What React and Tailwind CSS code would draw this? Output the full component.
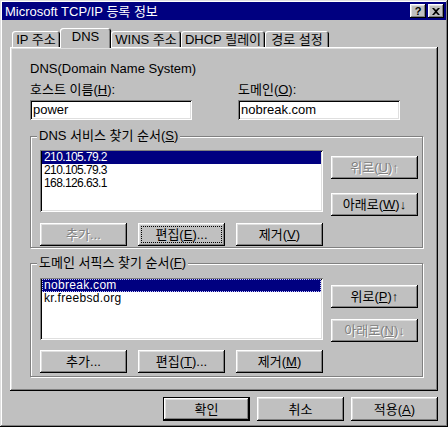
import React from "react";

const raised =
  "shadow-[inset_-1px_-1px_#000,inset_1px_1px_#fff,inset_-2px_-2px_#808080,inset_2px_2px_#dfdfdf]";
const sunken =
  "shadow-[inset_1px_1px_#808080,inset_-1px_-1px_#fff,inset_2px_2px_#000,inset_-2px_-2px_#dfdfdf]";
const disabledText = "text-[#808080] [text-shadow:1px_1px_0_#fff]";

const tabs = [
  { label: "IP 주소", width: "w-[48px]" },
  { label: "DNS", width: "w-[51px]", active: true },
  { label: "WINS 주소", width: "w-[70px]" },
  { label: "DHCP 릴레이", width: "w-[84px]" },
  { label: "경로 설정", width: "w-[64px]" },
];

function Btn({ children, disabled, focus, isDefault, className = "" }) {
  return (
    <div
      className={`flex h-[23px] w-[87px] shrink-0 bg-[#c0c0c0] p-[3px] ${raised} ${
        isDefault ? "border border-black p-[2px]" : ""
      } ${className}`}
    >
      <span
        className={`flex flex-1 items-center justify-center border border-dotted leading-none ${
          focus ? "border-black" : "border-transparent"
        } ${disabled ? disabledText : ""}`}
      >
        {children}
      </span>
    </div>
  );
}

function GroupBox({ label, children, className = "" }) {
  return (
    <div
      className={`relative w-[393px] border border-[#808080] shadow-[inset_1px_1px_#fff,1px_1px_#fff] ${className}`}
    >
      <span className="absolute -top-[9px] left-[6px] bg-[#c0c0c0] px-[2px] leading-[15px]">
        {label}
      </span>
      {children}
    </div>
  );
}

function ListBox({ items, focusRow, tight }) {
  return (
    <div className={`h-[62px] w-[283px] bg-white p-[2px] pt-[1px] text-[12px] ${sunken}`}>
      {items.map((item, i) => (
        <div
          key={item}
          className={`h-[13px] pl-[2px] leading-[13px] ${
            tight ? "tracking-[-0.6px]" : "tracking-[0.3px]"
          } ${i === 0 ? "bg-[#000080] text-white" : ""} ${
            i === 0 && focusRow ? "outline-1 -outline-offset-1 outline-dotted outline-[#c0c0ff]" : ""
          }`}
        >
          {item}
        </div>
      ))}
    </div>
  );
}

export default function App() {
  return (
    <div className="flex h-[427px] w-[448px] flex-col bg-[#c0c0c0] p-[2px] font-['Liberation_Sans','Noto_Sans_CJK_KR',sans-serif] text-[13px] text-black shadow-[inset_-1px_-1px_#000,inset_1px_1px_#dfdfdf,inset_-2px_-2px_#808080,inset_2px_2px_#fff]">
      {/* title bar */}
      <div className="flex h-[18px] shrink-0 items-center justify-between bg-[#000080] pl-[3px] pr-[2px] text-white">
        <span className="leading-none">Microsoft TCP/IP 등록 정보</span>
        <div className="flex gap-[2px]">
          <div className={`flex h-[14px] w-[16px] items-center justify-center bg-[#c0c0c0] text-[11px] font-bold text-black ${raised}`}>
            ?
          </div>
          <div className={`flex h-[14px] w-[16px] items-center justify-center bg-[#c0c0c0] ${raised}`}>
            <svg width="8" height="7" viewBox="0 0 8 7">
              <path d="M0 0h2l2 2 2-2h2L5 3.5 8 7H6L4 5 2 7H0l3-3.5z" fill="#000" />
            </svg>
          </div>
        </div>
      </div>

      {/* tabs */}
      <div className="mt-[8px] flex items-end pl-[10px]">
        {tabs.map((t) =>
          t.active ? (
            <div
              key={t.label}
              className={`relative z-10 -mb-[1px] flex h-[20px] ${t.width} justify-center rounded-t-[3px] bg-[#c0c0c0] pt-[2px] leading-[14px] shadow-[inset_1px_1px_#fff,inset_-1px_0_#000,inset_-2px_0_#808080]`}
            >
              {t.label}
            </div>
          ) : (
            <div
              key={t.label}
              className={`flex h-[16px] ${t.width} items-center justify-center rounded-t-[3px] leading-none shadow-[inset_1px_1px_#fff,inset_-1px_0_#000,inset_-2px_0_#808080]`}
            >
              {t.label}
            </div>
          )
        )}
      </div>

      {/* tab panel */}
      <div className="ml-[8px] flex h-[344px] w-[428px] shrink-0 flex-col pl-[20px] pt-[14px] shadow-[inset_-1px_-1px_#000,inset_1px_1px_#fff,inset_-2px_-2px_#808080,inset_2px_2px_#dfdfdf]">
        <div className="leading-[15px]">DNS(Domain Name System)</div>

        <div className="mt-[6px] flex gap-[46px]">
          <div className="flex w-[162px] flex-col">
            <span className="leading-[15px]">
              호스트 이름(<u>H</u>):
            </span>
            <div className={`mt-[3px] h-[20px] bg-white pl-[3px] leading-[20px] ${sunken}`}>power</div>
          </div>
          <div className="flex w-[162px] flex-col">
            <span className="leading-[15px]">
              도메인(<u>O</u>):
            </span>
            <div className={`mt-[3px] h-[20px] bg-white pl-[3px] leading-[20px] ${sunken}`}>nobreak.com</div>
          </div>
        </div>

        <GroupBox
          className="mt-[16px] h-[112px] pl-[9px] pt-[13px]"
          label={
            <>
              DNS 서비스 찾기 순서(<u>S</u>)
            </>
          }
        >
          <div className="flex gap-[8px]">
            <ListBox tight items={["210.105.79.2", "210.105.79.3", "168.126.63.1"]} />
            <div className="flex flex-col pt-[6px]">
              <Btn disabled>
                위로(<u>U</u>)↑
              </Btn>
              <Btn className="mt-[14px]">
                아래로(<u>W</u>)↓
              </Btn>
            </div>
          </div>
          <div className="mt-[7px] flex gap-[11px]">
            <Btn disabled>추가...</Btn>
            <Btn focus>
              편집(<u>E</u>)...
            </Btn>
            <Btn>
              제거(<u>V</u>)
            </Btn>
          </div>
        </GroupBox>

        <GroupBox
          className="mt-[15px] h-[114px] pl-[9px] pt-[14px]"
          label={
            <>
              도메인 서픽스 찾기 순서(<u>F</u>)
            </>
          }
        >
          <div className="flex gap-[8px]">
            <ListBox focusRow items={["nobreak.com", "kr.freebsd.org"]} />
            <div className="flex flex-col pt-[7px]">
              <Btn>
                위로(<u>P</u>)↑
              </Btn>
              <Btn disabled className="mt-[11px]">
                아래로(<u>N</u>)↓
              </Btn>
            </div>
          </div>
          <div className="mt-[8px] flex gap-[11px]">
            <Btn>추가...</Btn>
            <Btn>
              편집(<u>T</u>)...
            </Btn>
            <Btn>
              제거(<u>M</u>)
            </Btn>
          </div>
        </GroupBox>
      </div>

      {/* dialog buttons */}
      <div className="mt-[6px] flex justify-end gap-[7px] pr-[8px]">
        <Btn isDefault className="h-[24px]">
          확인
        </Btn>
        <Btn className="h-[24px]">취소</Btn>
        <Btn className="h-[24px]">
          적용(<u>A</u>)
        </Btn>
      </div>
    </div>
  );
}
